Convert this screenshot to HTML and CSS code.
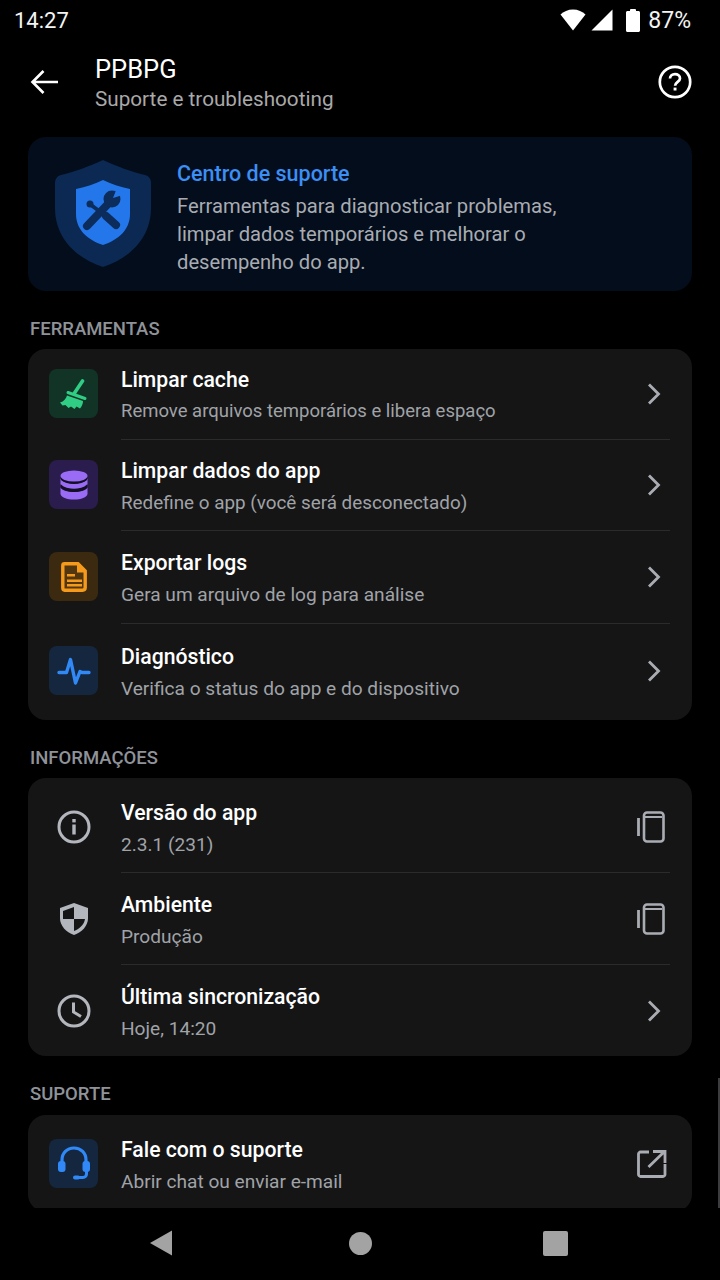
FILE: index.html
```html
<!DOCTYPE html>
<html lang="pt-BR">
<head>
    <meta charset="UTF-8">
    <meta name="viewport" content="width=device-width, initial-scale=1.0">
    <title>PPBPG - Suporte e troubleshooting</title>
    <link rel="stylesheet" href="styles.css">
</head>
<body>
    <div class="status-bar">
        <span class="status-time">14:27</span>
        <div class="status-icons">
            <svg class="wifi-icon" width="26" height="22" viewBox="0 0 26 22"><path d="M0.500 5.500C3.500 2.500 8 0.500 13 0.500S22.500 2.500 25.500 5.500L13 21.500Z" fill="#fff"/></svg>
            <svg class="signal-icon" width="22" height="22" viewBox="0 0 22 22"><path d="M0.500 21.500L21.500 0.500V21.500Z" fill="#fff"/></svg>
            <svg class="battery-icon" width="14" height="23" viewBox="0 0 14 23"><path d="M4 2V1C4 .5 4.500 0 5 0H9C9.500 0 10 .5 10 1V2H12.500C13.300 2 14 2.700 14 3.500V21.500C14 22.300 13.300 23 12.500 23H1.500C.7 23 0 22.300 0 21.500V3.500C0 2.700 .7 2 1.500 2Z" fill="#fff"/></svg>
            <span class="status-battery">87%</span>
        </div>
    </div>

    <header class="top-bar">
        <svg class="back-icon" width="30" height="26" viewBox="0 0 30 26"><path d="M28 13H3M13.500 2L2.500 13L13.500 24" fill="none" stroke="#fff" stroke-width="2.600"/></svg>
        <div class="top-titles">
            <div class="top-title">PPBPG</div>
            <div class="top-subtitle">Suporte e troubleshooting</div>
        </div>
        <svg class="help-icon" width="34" height="34" viewBox="0 0 34 34">
            <circle cx="17" cy="17" r="15.200" fill="none" stroke="#fff" stroke-width="2.700"/>
            <path d="M12 13.600C12 10.900 14.200 9.200 17 9.200S22 10.900 22 13.400C22 16.800 17.100 17 17.100 20.800" fill="none" stroke="#fff" stroke-width="2.700"/>
            <rect x="15.600" y="22.600" width="2.900" height="2.900" fill="#fff"/>
        </svg>
    </header>

    <main class="content">
        <section class="hero">
            <svg class="hero-icon" width="98" height="108" viewBox="0 0 98 108">
                <path d="M49 0C62 6 78 12 91 15C95 16 97 19 97 23V48C97 78 76 98 49 107C22 98 1 78 1 48V23C1 19 3 16 7 15C20 12 36 6 49 0Z" fill="#0b2953"/>
                <path d="M49 20C57 24 66 27 76 29V54C76 70 64 80 49 85C34 80 22 70 22 54V29C32 27 41 24 49 20Z" fill="#2477ea"/>
                <path d="M33 66L54 44" stroke="#0c2d5c" stroke-width="8" stroke-linecap="round"/>
                <circle cx="58" cy="39" r="8.500" fill="#0c2d5c"/>
                <path d="M59 38L63 28L72 34Z" fill="#2477ea"/>
                <path d="M37 45L52 56" stroke="#0c2d5c" stroke-width="4"/>
                <path d="M52 56L62 65" stroke="#0c2d5c" stroke-width="8" stroke-linecap="round"/>
                <circle cx="36" cy="44" r="3.500" fill="#0c2d5c"/>
            </svg>
            <div class="hero-text">
                <h2 class="hero-title">Centro de suporte</h2>
                <p class="hero-desc">Ferramentas para diagnosticar problemas,<br>limpar dados temporários e melhorar o<br>desempenho do app.</p>
            </div>
        </section>

        <h3 class="section-label">FERRAMENTAS</h3>
        <section class="card">
            <div class="row row-cache">
                <div class="icon-box box-green">
                    <svg width="30" height="30" viewBox="0 0 30 30">
                        <path d="M23.500 2L15.500 14" stroke="#2fce84" stroke-width="3.600" stroke-linecap="round"/>
                        <path d="M9 13.500L26 19.500" stroke="#2fce84" stroke-width="3" stroke-linecap="round"/>
                        <path d="M8 16.500L24 22C24 24.500 23 27 21 29.500L17.500 27.500L15.500 30L12 27.500L9.500 29L6.500 26L3.500 26.500L1 23.500C5 22.500 7 19.500 8 16.500Z" fill="#2fce84"/>
                    </svg>
                </div>
                <div class="row-main">
                    <div class="row-title">Limpar cache</div>
                    <div class="row-sub">Remove arquivos temporários e libera espaço</div>
                </div>
                <svg class="chevron" width="14" height="22" viewBox="0 0 14 22"><path d="M2 1.500L11.500 11L2 20.500" fill="none" stroke="#a9adb3" stroke-width="2.800"/></svg>
            </div>
            <div class="row row-data">
                <div class="icon-box box-purple">
                    <svg width="30" height="32" viewBox="0 0 30 32">
                        <path d="M1.500 9.500C3 13 9 14.500 15 14.500S27 13 28.500 9.500V15C28 18 22 20 15 20S2 18 1.500 15Z" fill="#9a6cf5"/>
                        <path d="M1.500 18.500C3 21.500 9 23 15 23S27 21.500 28.500 18.500V25C28 28.500 22 30.500 15 30.500S2 28.500 1.500 25Z" fill="#9a6cf5"/>
                        <path d="M2 15.500C5 18.500 10 19.700 15 19.700S25 18.500 28 15.500V19C25 21.500 20 23 15 23S5 21.500 2 19Z" fill="#141024"/>
                        <path d="M2 7.500C5 10.500 10 11.700 15 11.700S25 10.500 28 7.500V11C25 13.500 20 15 15 15S5 13.500 2 11Z" fill="#141024"/>
                        <ellipse cx="15" cy="7" rx="13.500" ry="5.500" fill="#9a6cf5"/>
                    </svg>
                </div>
                <div class="row-main">
                    <div class="row-title">Limpar dados do app</div>
                    <div class="row-sub">Redefine o app (você será desconectado)</div>
                </div>
                <svg class="chevron" width="14" height="22" viewBox="0 0 14 22"><path d="M2 1.500L11.500 11L2 20.500" fill="none" stroke="#a9adb3" stroke-width="2.800"/></svg>
            </div>
            <div class="row row-logs">
                <div class="icon-box box-orange">
                    <svg width="26" height="30" viewBox="0 0 26 30">
                        <path d="M3.500 1.800H17L24.200 9V25.500C24.200 27.200 23.200 28.200 21.500 28.200H3.500C2.500 28.200 1.800 27.200 1.800 25.500V3.500C1.800 2.500 2.500 1.800 3.500 1.800Z" fill="#52360f" stroke="#f59a1b" stroke-width="3.400"/>
                        <path d="M16 2V10.500H24Z" fill="#f59a1b"/>
                        <path d="M6 12H14V14.500H6ZM6 17.500H21V20H6ZM6 22H21V24.500H6Z" fill="#f59a1b"/>
                    </svg>
                </div>
                <div class="row-main">
                    <div class="row-title">Exportar logs</div>
                    <div class="row-sub">Gera um arquivo de log para análise</div>
                </div>
                <svg class="chevron" width="14" height="22" viewBox="0 0 14 22"><path d="M2 1.500L11.500 11L2 20.500" fill="none" stroke="#a9adb3" stroke-width="2.800"/></svg>
            </div>
            <div class="row row-diag">
                <div class="icon-box box-blue">
                    <svg width="34" height="28" viewBox="0 0 34 28"><path d="M2 15.500H9.500L13.500 2.500L18.500 26L23 14.500L25 15.500H32" fill="none" stroke="#3089f7" stroke-width="3.400" stroke-linecap="round" stroke-linejoin="round"/></svg>
                </div>
                <div class="row-main">
                    <div class="row-title">Diagnóstico</div>
                    <div class="row-sub">Verifica o status do app e do dispositivo</div>
                </div>
                <svg class="chevron" width="14" height="22" viewBox="0 0 14 22"><path d="M2 1.500L11.500 11L2 20.500" fill="none" stroke="#a9adb3" stroke-width="2.800"/></svg>
            </div>
        </section>

        <h3 class="section-label">INFORMAÇÕES</h3>
        <section class="card">
            <div class="row row-version">
                <div class="icon-plain">
                    <svg width="34" height="34" viewBox="0 0 34 34">
                        <circle cx="17" cy="17" r="15" fill="none" stroke="#b3b7bd" stroke-width="3"/>
                        <rect x="15.300" y="14.500" width="3.400" height="10" fill="#b3b7bd"/>
                        <rect x="15.300" y="9" width="3.400" height="3.400" fill="#b3b7bd"/>
                    </svg>
                </div>
                <div class="row-main">
                    <div class="row-title">Versão do app</div>
                    <div class="row-sub">2.3.1 (231)</div>
                </div>
                <svg class="copy-icon" width="30" height="32" viewBox="0 0 30 32">
                    <rect x="8" y="1.500" width="19.500" height="29" rx="3" fill="none" stroke="#a9adb3" stroke-width="2.600"/>
                    <path d="M2.500 7V25" stroke="#a9adb3" stroke-width="2.800"/>
                    <path d="M9 6H26" stroke="#a9adb3" stroke-width="2"/>
                </svg>
            </div>
            <div class="row row-env">
                <div class="icon-plain">
                    <svg width="30" height="34" viewBox="0 0 30 34">
                        <path d="M15 1L29 6V16C29 24 23 30 15 33C7 30 1 24 1 16V6Z" fill="#b3b7bd"/>
                        <path d="M15 5L4 9V17H15ZM15 17V29C20 27 25 23 26 17Z" fill="#151516"/>
                    </svg>
                </div>
                <div class="row-main">
                    <div class="row-title">Ambiente</div>
                    <div class="row-sub">Produção</div>
                </div>
                <svg class="copy-icon" width="30" height="32" viewBox="0 0 30 32">
                    <rect x="8" y="1.500" width="19.500" height="29" rx="3" fill="none" stroke="#a9adb3" stroke-width="2.600"/>
                    <path d="M2.500 7V25" stroke="#a9adb3" stroke-width="2.800"/>
                    <path d="M9 6H26" stroke="#a9adb3" stroke-width="2"/>
                </svg>
            </div>
            <div class="row row-sync">
                <div class="icon-plain">
                    <svg width="34" height="34" viewBox="0 0 34 34">
                        <circle cx="17" cy="17" r="15" fill="none" stroke="#b3b7bd" stroke-width="3"/>
                        <path d="M16.500 8.500V18L24 22.500" fill="none" stroke="#b3b7bd" stroke-width="3"/>
                    </svg>
                </div>
                <div class="row-main">
                    <div class="row-title">Última sincronização</div>
                    <div class="row-sub">Hoje, 14:20</div>
                </div>
                <svg class="chevron" width="14" height="22" viewBox="0 0 14 22"><path d="M2 1.500L11.500 11L2 20.500" fill="none" stroke="#a9adb3" stroke-width="2.800"/></svg>
            </div>
        </section>

        <h3 class="section-label label-support">SUPORTE</h3>
        <section class="card">
            <div class="row row-contact">
                <div class="icon-box box-blue">
                    <svg width="34" height="36" viewBox="0 0 34 36">
                        <path d="M5 20V14C5 7 10 2 17 2S29 7 29 14V20" fill="none" stroke="#3089f7" stroke-width="3.200"/>
                        <rect x="1" y="15" width="7.500" height="11" rx="3" fill="#3089f7"/>
                        <rect x="25.500" y="15" width="7.500" height="11" rx="3" fill="#3089f7"/>
                        <path d="M29.500 25V28C29.500 30 28 31.500 26 31.500H19" fill="none" stroke="#3089f7" stroke-width="3"/>
                        <rect x="16" y="29.500" width="7" height="4" rx="2" fill="#3089f7"/>
                    </svg>
                </div>
                <div class="row-main">
                    <div class="row-title">Fale com o suporte</div>
                    <div class="row-sub">Abrir chat ou enviar e-mail</div>
                </div>
                <svg class="external-icon" width="30" height="28" viewBox="0 0 30 28">
                    <path d="M12 2H3.500C2.500 2 1.500 3 1.500 4V24.500C1.500 25.500 2.500 26.500 3.500 26.500H26C27 26.500 28 25.500 28 24.500V14" fill="none" stroke="#a9adb3" stroke-width="2.800"/>
                    <path d="M11.500 17L27 2M16 1.500H28V13" fill="none" stroke="#a9adb3" stroke-width="2.800"/>
                </svg>
            </div>
        </section>
    </main>

    <nav class="nav-bar">
        <svg width="24" height="26" viewBox="0 0 24 26"><path d="M23 0.500V25.500L1 13Z" fill="#a3a3a3"/></svg>
        <div class="nav-home"></div>
        <div class="nav-recent"></div>
    </nav>
</body>
</html>
```

FILE: styles.css
```css
* {
    box-sizing: border-box;
}

body {
    margin: 0;
    width: 720px;
    height: 1280px;
    overflow: hidden;
    display: flex;
    flex-direction: column;
    background-color: #000;
    color: #fff;
    font-family: Roboto, "Noto Sans", sans-serif;
}

/* status bar */
.status-bar {
    height: 40px;
    flex: none;
    display: flex;
    align-items: center;
    justify-content: space-between;
    padding: 0 29px 0 14px;
}

.status-time {
    font-size: 22px;
    color: #f4f4f4;
}

.status-battery {
    font-size: 23px;
    color: #f4f4f4;
}

.status-icons {
    display: flex;
    align-items: center;
}

.signal-icon {
    margin: 0 13px 0 5px;
}

.battery-icon {
    margin-right: 8px;
}

/* top bar */
.top-bar {
    height: 97px;
    flex: none;
    display: flex;
    align-items: flex-start;
    padding: 12px 28px 0 30px;
}

.back-icon {
    margin: 17px 35px 0 0;
}

.top-titles {
    flex: 1;
}

.top-title {
    font-size: 25.500px;
    line-height: 34px;
}

.top-subtitle {
    font-size: 20.700px;
    line-height: 26px;
    color: #a9a9a9;
}

.help-icon {
    margin-top: 13px;
}

/* scrolled content */
.content {
    position: relative;
    height: 1071px;
    flex: none;
    overflow: hidden;
    padding: 0 28px;
}

/* scrollbar thumb, over the content */
.content::after {
    content: "";
    position: absolute;
    right: 0;
    bottom: 0;
    width: 2px;
    height: 130px;
    background-color: #3c3c3e;
}

.hero {
    height: 154px;
    display: flex;
    align-items: center;
    gap: 25px;
    padding-left: 26px;
    border-radius: 18px;
    background-color: #040d1b;
}

.hero-icon {
    flex: none;
}

.hero-text {
    padding-top: 6px;
}

.hero-title {
    margin: 1px 0 3px;
    font-size: 21.500px;
    line-height: 30px;
    font-weight: 500;
    color: #3b8ff5;
}

.hero-desc {
    margin: 0;
    font-size: 20.200px;
    line-height: 28px;
    color: #a8acb2;
}

.section-label {
    margin: 0;
    height: 58px;
    padding: 27px 2px 0;
    font-size: 18.500px;
    line-height: 22px;
    font-weight: 500;
    color: #8f9399;
}

.label-support {
    height: 59px;
}

.card {
    border-radius: 18px;
    background-color: #151516;
}

.row {
    position: relative;
    display: flex;
    align-items: center;
    padding: 0 22px 0 21px;
}

.row-cache { height: 90px; padding-bottom: 1px; }
.row-data { height: 91px; }
.row-logs { height: 93px; }
.row-diag { height: 97px; padding-bottom: 2px; }
.row-version { height: 94px; padding-top: 4px; }
.row-env { height: 92px; padding-top: 2px; }
.row-sync { height: 92px; padding-top: 2px; }
.row-contact { height: 97px; }

.icon-box,
.icon-plain {
    width: 49px;
    height: 49px;
    flex: none;
    display: flex;
    align-items: center;
    justify-content: center;
    border-radius: 8px;
}

.box-green { background-color: #123426; }
.box-purple { background-color: #2a1c4c; }
.box-orange { background-color: #3b2a10; }
.box-blue { background-color: #15273f; }

.row-main {
    flex: 1;
    align-self: stretch;
    display: flex;
    flex-direction: column;
    justify-content: center;
    margin: 0 -1px 0 23px;
    padding: 4px 60px 0 0;
    gap: 6px;
}

.row-cache .row-main {
    gap: 5px;
}

.row-diag .row-main {
    padding-top: 5px;
}

.row-contact .row-main {
    padding-top: 5px;
}

.row-title {
    font-size: 21.200px;
    line-height: 26px;
    font-weight: 500;
}

.row-sub {
    font-size: 19.100px;
    line-height: 26px;
    color: #a0a3a8;
}

.row-cache .row-sub {
    font-size: 18.500px;
}

.row-data .row-sub {
    font-size: 18.850px;
}

/* row dividers start at the text, not the icon */
.row + .row::before {
    content: "";
    position: absolute;
    top: 0;
    left: 93px;
    right: 22px;
    height: 1px;
    background-color: #2a2b2e;
}

.chevron {
    flex: none;
    margin-right: 9px;
}

.copy-icon {
    flex: none;
    margin-right: 4px;
}

.external-icon {
    flex: none;
    margin-right: 3px;
}

/* android nav */
.nav-bar {
    height: 72px;
    flex: none;
    display: flex;
    align-items: center;
    justify-content: space-between;
    padding: 0 152px 2px 149px;
    background-color: #000;
}

.nav-home {
    width: 23px;
    height: 23px;
    margin-left: 4px;
    border-radius: 50%;
    background-color: #a3a3a3;
}

.nav-recent {
    width: 25px;
    height: 25px;
    border-radius: 2px;
    background-color: #a3a3a3;
}
```
